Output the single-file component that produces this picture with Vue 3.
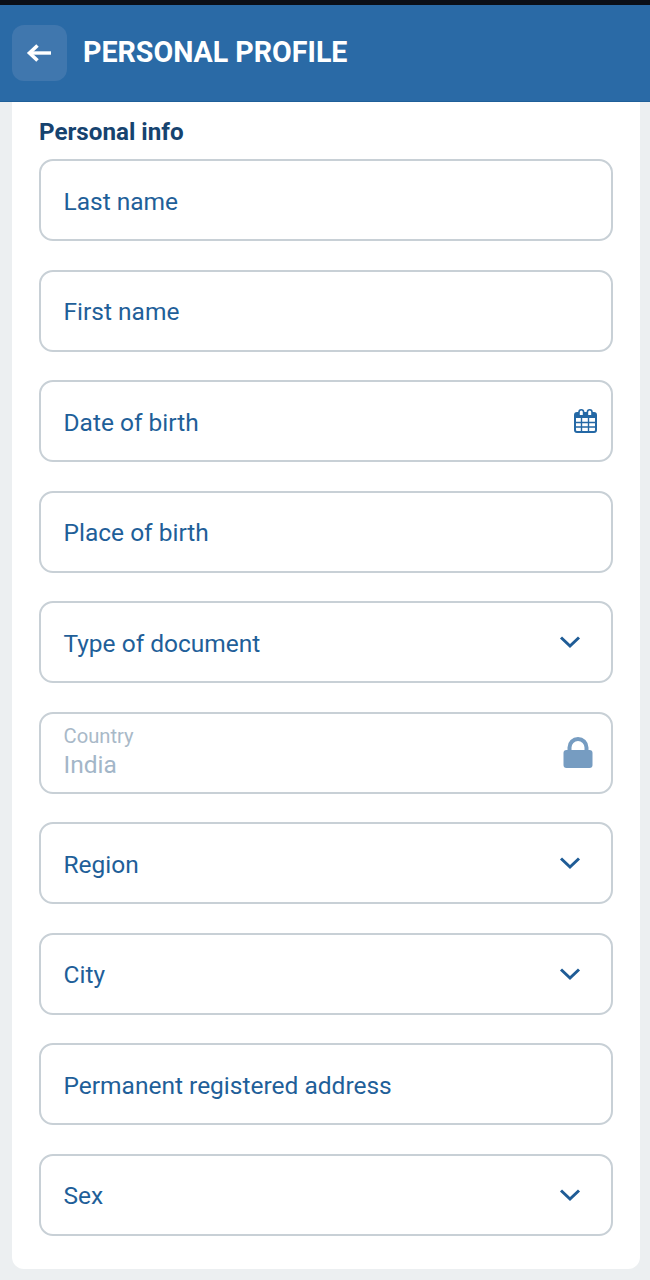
<template>
  <div class="page">
    <div class="status"></div>
    <header class="header">
      <button class="back">
        <svg width="26" height="20" viewBox="0 0 26 20">
          <path d="M25 10H6" stroke="#fff" stroke-width="3.4" fill="none" />
          <path d="M11.5 2.5 3.5 10l8 7.5" stroke="#fff" stroke-width="3.6" fill="none" />
        </svg>
      </button>
      <h1>PERSONAL PROFILE</h1>
    </header>

    <main class="card">
      <h2>Personal info</h2>
      <div class="fields">
        <div v-for="f in fields" :key="f.label" class="field" :class="{ locked: f.icon === 'lock' }">
          <div v-if="f.value" class="stacked">
            <span class="small">{{ f.label }}</span>
            <span class="value">{{ f.value }}</span>
          </div>
          <span v-else class="label">{{ f.label }}</span>

          <svg v-if="f.icon === 'chevron'" class="chevron" width="22" height="14" viewBox="0 0 22 14">
            <path d="M2 2.5 11 11l9-8.5" stroke="#1f5c96" stroke-width="3" fill="none" />
          </svg>
          <svg v-if="f.icon === 'calendar'" class="calendar" width="24" height="26" viewBox="0 0 24 26">
            <rect x="2" y="5" width="21" height="19" rx="2" fill="#fff" stroke="#2468a5" stroke-width="2" />
            <rect x="2" y="5" width="21" height="5" fill="#2468a5" />
            <path d="M8.5 10v14M15.5 10v14M2 14.5h21M2 19h21" stroke="#2468a5" stroke-width="1.4" />
            <path d="M6 7V4a2.3 2.3 0 0 1 4.6 0v3M14.4 7V4a2.3 2.3 0 0 1 4.6 0v3" stroke="#2468a5" stroke-width="1.6" fill="#fff" />
          </svg>
          <svg v-if="f.icon === 'lock'" class="lock" width="30" height="32" viewBox="0 0 30 32">
            <path d="M6.5 15v-4.500a8.500 8.500 0 0 1 17 0V15" stroke="#769cc1" stroke-width="4" fill="none" />
            <rect x="0.5" y="13" width="29" height="18" rx="3" fill="#769cc1" />
          </svg>
        </div>
      </div>
    </main>
  </div>
</template>

<script setup>
const fields = [
  { label: 'Last name' },
  { label: 'First name' },
  { label: 'Date of birth', icon: 'calendar' },
  { label: 'Place of birth' },
  { label: 'Type of document', icon: 'chevron' },
  { label: 'Country', value: 'India', icon: 'lock' },
  { label: 'Region', icon: 'chevron' },
  { label: 'City', icon: 'chevron' },
  { label: 'Permanent registered address' },
  { label: 'Sex', icon: 'chevron' }
]
</script>

<style>
html, body {
  margin: 0;
  background: #eceff1;
}
</style>

<style scoped>
.page {
  width: 650px;
  height: 1280px;
  overflow: hidden;
  background: #eceff1;
  font-family: Roboto, "Liberation Sans", sans-serif;
}

.status {
  height: 5px;
  background: #0b0f17;
}

.header {
  height: 97px;
  box-sizing: border-box;
  padding: 0 12px;
  background: #2a6aa6;
  border-bottom: 1px solid #1f5f99;
  display: flex;
  align-items: center;
  gap: 16px;
}

.back {
  width: 55px;
  height: 56px;
  padding: 0;
  border: none;
  border-radius: 12px;
  background: #4077ae;
  display: flex;
  align-items: center;
  justify-content: center;
}

.back svg {
  margin-left: -2px;
}

h1 {
  margin: 0 0 2px;
  color: #fff;
  font-size: 28.6px;
  font-weight: 700;
}

.card {
  margin: 0 10px 0 12px;
  height: 1167px;
  box-sizing: border-box;
  padding: 16px 27px 0;
  background: #fff;
  border-radius: 0 0 12px 12px;
}

h2 {
  margin: 0 0 14px;
  color: #16436f;
  font-size: 24.2px;
  line-height: 29px;
  font-weight: 700;
}

.fields {
  display: flex;
  flex-direction: column;
  gap: 28.5px;
  margin-top: -2px;
}

.field {
  height: 82px;
  box-sizing: border-box;
  padding: 0 18px 0 22.5px;
  border: 2px solid #c8d0d6;
  border-radius: 14px;
  display: flex;
  align-items: center;
  justify-content: space-between;
}

.label {
  position: relative;
  top: 1px;
  color: #1f5f99;
  font-size: 24.5px;
}

.stacked {
  display: flex;
  flex-direction: column;
}

.small {
  color: #a9b9c8;
  font-size: 20.2px;
  line-height: 25px;
}

.value {
  color: #a3b6c8;
  font-size: 24.5px;
  line-height: 32px;
}

.chevron {
  margin-right: 12px;
}

.calendar {
  margin-right: -4px;
}
</style>
